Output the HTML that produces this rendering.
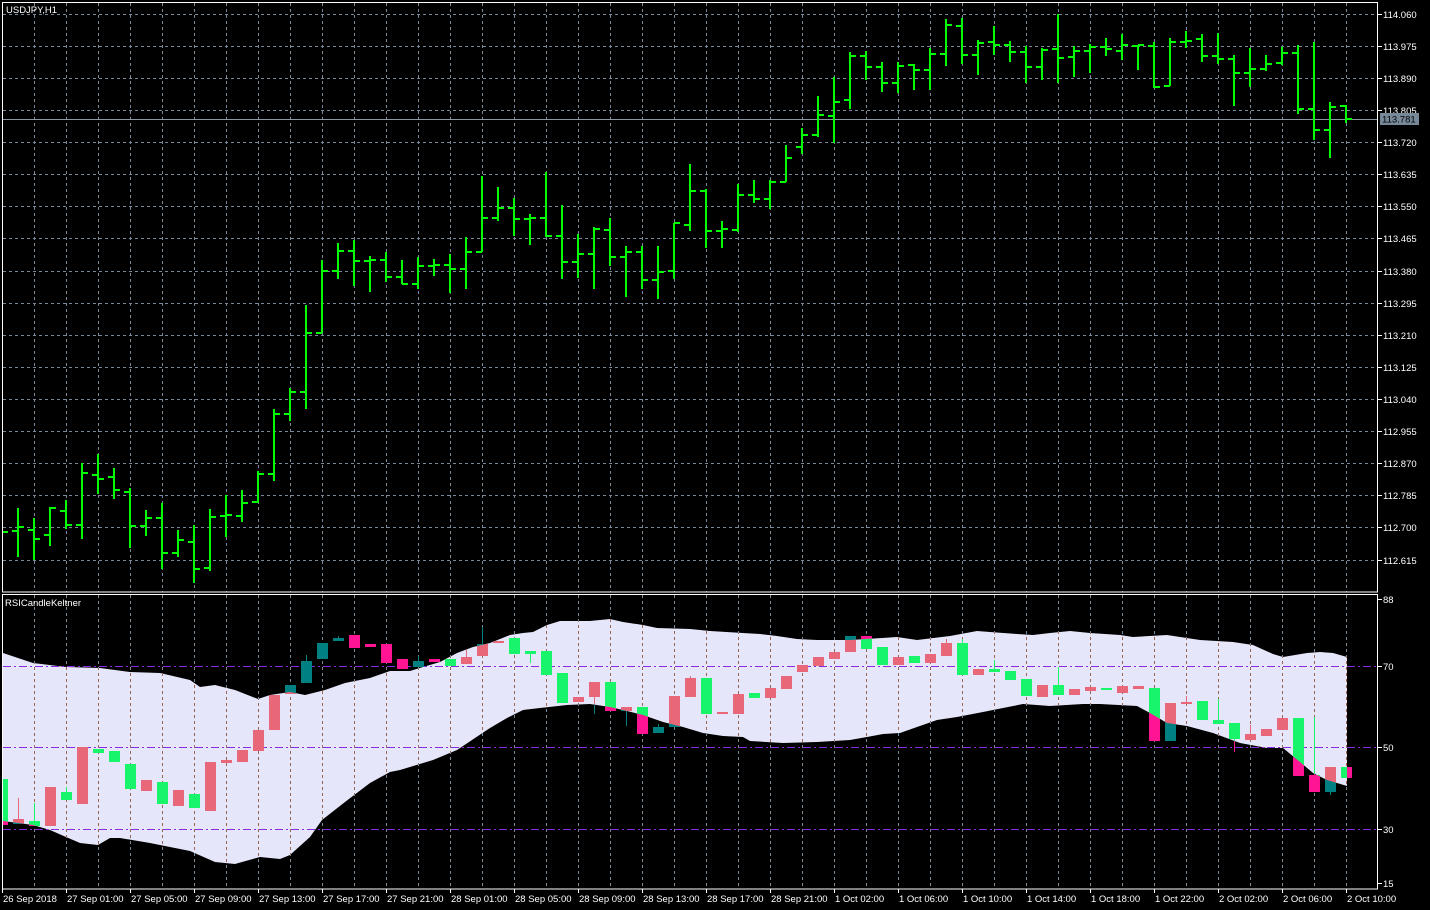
<!DOCTYPE html>
<html><head><meta charset="utf-8"><style>
html,body{margin:0;padding:0;background:#000;width:1430px;height:910px;overflow:hidden}
svg{display:block}
text{font-family:"Liberation Sans","DejaVu Sans",sans-serif;font-size:9.5px;fill:#fff}
</style></head><body>
<svg width="1430" height="910" viewBox="0 0 1430 910" xmlns="http://www.w3.org/2000/svg">
<defs>
<clipPath id="mainclip"><rect x="3" y="3" width="1375" height="589"/></clipPath>
<clipPath id="band"><polygon id="bandp" points="3,653 33,663 66,667 100,668 130,672 160,673 190,680 200,687 215,685 235,690 258,699 270,695 290,692 305,695 325,690 345,683 370,678 390,671 410,671 423,667 440,662 457,653 473,647 490,643 510,635 523,633 533,632 547,625 560,621 590,621 610,619 623,622 643,625 657,628 690,629 710,631 743,633 760,634 777,636 797,639 817,640 850,640 897,637 917,640 950,636 977,631 990,632 1017,634 1033,635 1050,633 1070,631 1090,633 1120,635 1133,637 1167,635 1200,640 1233,642 1253,645 1273,654 1283,657 1307,653 1320,652 1333,653 1347,657 1347,786 1327,780 1313,773 1300,762 1283,748 1267,748 1240,743 1213,733 1187,726 1167,723 1150,713 1137,706 1100,704 1083,704 1050,706 1023,704 1003,708 983,712 957,717 937,720 917,727 900,733 883,734 867,737 850,740 817,742 783,743 750,741 743,737 723,736 703,733 683,727 663,722 643,715 623,710 610,707 590,704 567,705 540,708 523,710 507,718 490,728 457,750 433,760 400,770 390,772 370,783 345,802 322,820 310,837 290,855 280,859 260,857 235,864 215,862 190,851 150,843 120,838 110,838 98,845 80,843 66,837 50,830 33,825 3,821"/></clipPath>
<g id="cu">
<rect x="13" y="819" width="11" height="5"/><rect x="18" y="798" width="1" height="26"/>
<rect x="45" y="787" width="11" height="39"/>
<rect x="77" y="747" width="11" height="57"/>
<rect x="141" y="780" width="11" height="11"/>
<rect x="173" y="790" width="11" height="16"/>
<rect x="205" y="762" width="11" height="49"/>
<rect x="221" y="760" width="11" height="3"/>
<rect x="237" y="750" width="11" height="12"/>
<rect x="253" y="730" width="11" height="21"/>
<rect x="269" y="695" width="11" height="35"/>
<rect x="285" y="685" width="11" height="9"/>
<rect x="301" y="661" width="11" height="22"/><rect x="306" y="655" width="1" height="10"/>
<rect x="317" y="643" width="11" height="16"/>
<rect x="333" y="638" width="11" height="3"/><rect x="338" y="636" width="1" height="5"/>
<rect x="413" y="661" width="11" height="6"/><rect x="418" y="656" width="1" height="6"/>
<rect x="461" y="657" width="11" height="7"/><rect x="466" y="650" width="1" height="8"/>
<rect x="477" y="644" width="11" height="12"/><rect x="482" y="627" width="1" height="18"/>
<rect x="493" y="641" width="11" height="2"/>
<rect x="573" y="697" width="11" height="5"/>
<rect x="589" y="682" width="11" height="15"/><rect x="594" y="696" width="1" height="18"/>
<rect x="621" y="707" width="11" height="4"/><rect x="626" y="710" width="1" height="16"/>
<rect x="653" y="727" width="11" height="6"/><rect x="658" y="724" width="1" height="4"/>
<rect x="669" y="696" width="11" height="31"/>
<rect x="685" y="678" width="11" height="19"/><rect x="690" y="676" width="1" height="3"/>
<rect x="717" y="712" width="11" height="2"/>
<rect x="733" y="694" width="11" height="20"/>
<rect x="765" y="688" width="11" height="10"/>
<rect x="781" y="676" width="11" height="13"/>
<rect x="797" y="665" width="11" height="7"/>
<rect x="813" y="657" width="11" height="9"/>
<rect x="829" y="652" width="11" height="7"/>
<rect x="845" y="636" width="11" height="16"/>
<rect x="893" y="657" width="11" height="8"/>
<rect x="925" y="654" width="11" height="9"/>
<rect x="941" y="643" width="11" height="13"/><rect x="946" y="639" width="1" height="5"/>
<rect x="973" y="669" width="11" height="6"/>
<rect x="1037" y="685" width="11" height="12"/>
<rect x="1069" y="689" width="11" height="6"/>
<rect x="1085" y="687" width="11" height="4"/>
<rect x="1117" y="686" width="11" height="7"/>
<rect x="1133" y="686" width="11" height="3"/>
<rect x="1165" y="703" width="11" height="38"/>
<rect x="1181" y="702" width="11" height="2"/><rect x="1186" y="696" width="1" height="7"/>
<rect x="1245" y="734" width="11" height="6"/><rect x="1250" y="725" width="1" height="10"/>
<rect x="1261" y="729" width="11" height="7"/>
<rect x="1277" y="718" width="11" height="12"/>
<rect x="1325" y="767" width="11" height="25"/><rect x="1330" y="790" width="1" height="5"/>
</g>
<g id="cd">
<rect x="-3" y="779" width="11" height="46"/>
<rect x="29" y="821" width="11" height="5"/><rect x="34" y="803" width="1" height="20"/>
<rect x="61" y="792" width="11" height="8"/><rect x="66" y="787" width="1" height="6"/>
<rect x="93" y="749" width="11" height="4"/>
<rect x="109" y="751" width="11" height="11"/>
<rect x="125" y="764" width="11" height="25"/>
<rect x="157" y="782" width="11" height="22"/>
<rect x="189" y="794" width="11" height="14"/>
<rect x="349" y="635" width="11" height="13"/>
<rect x="365" y="644" width="11" height="3"/>
<rect x="381" y="644" width="11" height="19"/>
<rect x="397" y="659" width="11" height="10"/>
<rect x="429" y="659" width="11" height="3"/>
<rect x="445" y="659" width="11" height="7"/>
<rect x="509" y="638" width="11" height="16"/>
<rect x="525" y="651" width="11" height="3"/><rect x="530" y="653" width="1" height="10"/>
<rect x="541" y="651" width="11" height="24"/>
<rect x="557" y="673" width="11" height="30"/>
<rect x="605" y="682" width="11" height="29"/>
<rect x="637" y="707" width="11" height="27"/>
<rect x="701" y="678" width="11" height="36"/>
<rect x="749" y="693" width="11" height="5"/>
<rect x="861" y="636" width="11" height="13"/>
<rect x="877" y="647" width="11" height="18"/>
<rect x="909" y="656" width="11" height="7"/>
<rect x="957" y="643" width="11" height="32"/><rect x="962" y="639" width="1" height="5"/>
<rect x="989" y="669" width="11" height="3"/><rect x="994" y="660" width="1" height="10"/>
<rect x="1005" y="671" width="11" height="9"/>
<rect x="1021" y="679" width="11" height="17"/>
<rect x="1053" y="685" width="11" height="10"/><rect x="1058" y="667" width="1" height="19"/>
<rect x="1101" y="688" width="11" height="2"/>
<rect x="1149" y="688" width="11" height="53"/>
<rect x="1197" y="701" width="11" height="19"/>
<rect x="1213" y="720" width="11" height="4"/><rect x="1218" y="699" width="1" height="22"/>
<rect x="1229" y="723" width="11" height="16"/><rect x="1234" y="738" width="1" height="14"/>
<rect x="1293" y="718" width="11" height="58"/>
<rect x="1309" y="775" width="11" height="17"/><rect x="1314" y="717" width="1" height="59"/>
<rect x="1341" y="767" width="11" height="11"/>
</g>
</defs>

<!-- grids -->
<g stroke="#778899" stroke-width="1" stroke-dasharray="3,3" fill="none" shape-rendering="crispEdges">
<path d="M3 14.5H1378M3 46.5H1378M3 78.5H1378M3 110.5H1378M3 142.5H1378M3 174.5H1378M3 206.5H1378M3 238.5H1378M3 271.5H1378M3 303.5H1378M3 335.5H1378M3 367.5H1378M3 399.5H1378M3 431.5H1378M3 463.5H1378M3 495.5H1378M3 527.5H1378M3 560.5H1378"/>
<path d="M34.5 3V592M66.5 3V592M98.5 3V592M130.5 3V592M162.5 3V592M194.5 3V592M226.5 3V592M258.5 3V592M290.5 3V592M322.5 3V592M354.5 3V592M386.5 3V592M418.5 3V592M450.5 3V592M482.5 3V592M514.5 3V592M546.5 3V592M578.5 3V592M610.5 3V592M642.5 3V592M674.5 3V592M706.5 3V592M738.5 3V592M770.5 3V592M802.5 3V592M834.5 3V592M866.5 3V592M898.5 3V592M930.5 3V592M962.5 3V592M994.5 3V592M1026.5 3V592M1058.5 3V592M1090.5 3V592M1122.5 3V592M1154.5 3V592M1186.5 3V592M1218.5 3V592M1250.5 3V592M1282.5 3V592M1314.5 3V592M1346.5 3V592" id="vg"/>
<path d="M34.5 595V889M66.5 595V889M98.5 595V889M130.5 595V889M162.5 595V889M194.5 595V889M226.5 595V889M258.5 595V889M290.5 595V889M322.5 595V889M354.5 595V889M386.5 595V889M418.5 595V889M450.5 595V889M482.5 595V889M514.5 595V889M546.5 595V889M578.5 595V889M610.5 595V889M642.5 595V889M674.5 595V889M706.5 595V889M738.5 595V889M770.5 595V889M802.5 595V889M834.5 595V889M866.5 595V889M898.5 595V889M930.5 595V889M962.5 595V889M994.5 595V889M1026.5 595V889M1058.5 595V889M1090.5 595V889M1122.5 595V889M1154.5 595V889M1186.5 595V889M1218.5 595V889M1250.5 595V889M1282.5 595V889M1314.5 595V889M1346.5 595V889" id="vg2"/>
</g>

<!-- price line -->
<line x1="3" y1="119.5" x2="1378" y2="119.5" stroke="#8a96a4" stroke-width="1"/>

<!-- main bars -->
<g clip-path="url(#mainclip)">
<path fill="none" stroke="#00ff00" stroke-width="2" d="
M2 520V540M-4 528H2M2 532H8
M18 508V557M12 531H18M18 527H24
M34 518V560M28 530H34M34 539H40
M50 507V546M44 535H50M50 508H56
M66 500V529M60 511H66M66 525H72
M82 463V539M76 525H82M82 473H88
M98 454V494M92 475H98M98 479H104
M114 468V499M108 477H114M114 490H120
M130 488V548M124 492H130M130 526H136
M146 510V536M140 526H146M146 518H152
M162 503V569M156 518H162M162 553H168
M178 530V557M172 553H178M178 540H184
M194 525V583M188 542H194M194 569H200
M210 509V571M204 568H210M210 517H216
M226 495V537M220 516H226M226 515H232
M242 490V522M236 516H242M242 503H248
M258 471V503M252 502H258M258 474H264
M274 409V481M268 474H274M274 414H280
M290 388V421M284 414H290M290 392H296
M306 305V409M300 392H306M306 333H312
M322 260V333M316 333H322M322 271H328
M338 243V279M332 271H338M338 251H344
M354 240V286M348 251H354M354 261H360
M370 256V292M364 261H370M370 260H376
M386 252V282M380 260H386M386 277H392
M402 260V284M396 277H402M402 284H408
M418 257V289M412 284H418M418 266H424
M434 259V276M428 266H434M434 265H440
M450 254V293M444 265H450M450 269H456
M466 237V289M460 269H466M466 252H472
M482 176V252M476 252H482M482 218H488
M498 187V221M492 218H498M498 208H504
M514 198V236M508 208H514M514 219H520
M530 214V245M524 219H530M530 218H536
M546 172V237M540 218H546M546 236H552
M562 205V279M556 236H562M562 262H568
M578 234V278M572 262H578M578 254H584
M594 227V289M588 254H594M594 229H600
M610 218V266M604 230H610M610 257H616
M626 246V297M620 257H626M626 252H632
M642 246V289M636 252H642M642 280H648
M658 246V299M652 280H658M658 272H664
M674 223V279M668 271H674M674 223H680
M690 164V231M684 225H690M690 191H696
M706 189V248M700 191H706M706 231H712
M722 221V248M716 231H722M722 229H728
M738 184V232M732 230H738M738 195H744
M754 180V203M748 195H754M754 199H760
M770 180V209M764 199H770M770 182H776
M786 145V182M780 182H786M786 158H792
M802 128V154M796 147H802M802 135H808
M818 96V137M812 135H818M818 115H824
M834 77V143M828 116H834M834 102H840
M850 52V109M844 100H850M850 56H856
M866 51V80M860 56H866M866 67H872
M882 62V92M876 67H882M882 83H888
M898 62V93M892 83H898M898 66H904
M914 64V90M908 65H914M914 70H920
M930 48V90M924 70H930M930 54H936
M946 19V66M940 54H946M946 25H952
M962 18V64M956 26H962M962 55H968
M978 40V75M972 55H978M978 43H984
M994 26V55M988 42H994M994 45H1000
M1010 41V62M1004 45H1010M1010 52H1016
M1026 46V83M1020 52H1026M1026 67H1032
M1042 48V80M1036 67H1042M1042 50H1048
M1058 14V83M1052 49H1058M1058 58H1064
M1074 46V77M1068 57H1074M1074 51H1080
M1090 44V73M1084 51H1090M1090 47H1096
M1106 38V56M1100 47H1106M1106 49H1112
M1122 34V60M1116 51H1122M1122 45H1128
M1138 45V70M1132 46H1138M1138 45H1144
M1154 42V88M1148 46H1154M1154 87H1160
M1170 38V86M1164 86H1170M1170 42H1176
M1186 31V48M1180 42H1186M1186 41H1192
M1202 34V62M1196 39H1202M1202 56H1208
M1218 33V64M1212 56H1218M1218 59H1224
M1234 55V106M1228 59H1234M1234 73H1240
M1250 48V87M1244 73H1250M1250 69H1256
M1266 55V71M1260 69H1266M1266 64H1272
M1282 47V65M1276 63H1282M1282 53H1288
M1298 45V114M1292 53H1298M1298 109H1304
M1314 42V140M1308 109H1314M1314 130H1320
M1330 102V158M1324 130H1330M1330 107H1336
M1346 105V123M1340 106H1346M1346 119H1352"/>
</g>

<!-- indicator band -->
<use href="#bandp" fill="#e6e6fa"/>
<g clip-path="url(#band)" stroke="#9a6656" stroke-width="1" stroke-dasharray="3,3" fill="none" shape-rendering="crispEdges">
<use href="#vg2"/>
</g>
<!-- levels -->
<g stroke="#8a2be2" stroke-width="1" fill="none" stroke-dasharray="8,3,2,3" shape-rendering="crispEdges">
<line x1="3" y1="666.5" x2="1378" y2="666.5"/>
<line x1="3" y1="747.5" x2="1378" y2="747.5"/>
<line x1="3" y1="829.5" x2="1378" y2="829.5"/>
</g>
<!-- candles -->
<g clip-path="url(#lowclip)">
<use href="#cu" fill="#008080"/>
<use href="#cd" fill="#ff1493"/>
<g clip-path="url(#band)">
<use href="#cu" fill="#e8687a"/>
<use href="#cd" fill="#19f56a"/>
</g>
</g>
<clipPath id="lowclip"><rect x="3" y="595" width="1375" height="294"/></clipPath>

<!-- frames -->
<g fill="none" stroke="#fff" stroke-width="1" shape-rendering="crispEdges">
<rect x="2.5" y="2.5" width="1375" height="589.5"/>
<rect x="2.5" y="594.5" width="1375" height="294.5"/>
</g>

<!-- labels -->
<text x="6" y="13">USDJPY,H1</text>
<text x="5" y="606">RSICandleKeltner</text>

<g stroke="#fff" stroke-width="1" shape-rendering="crispEdges">
<path d="M1378 14.5h4M1378 46.5h4M1378 78.5h4M1378 110.5h4M1378 142.5h4M1378 174.5h4M1378 206.5h4M1378 238.5h4M1378 271.5h4M1378 303.5h4M1378 335.5h4M1378 367.5h4M1378 399.5h4M1378 431.5h4M1378 463.5h4M1378 495.5h4M1378 527.5h4M1378 560.5h4M1378 599.5h4M1378 666.5h4M1378 747.5h4M1378 829.5h4M1378 883.5h4"/>
<path d="M2.5 889v4M66.5 889v4M130.5 889v4M194.5 889v4M258.5 889v4M322.5 889v4M386.5 889v4M450.5 889v4M514.5 889v4M578.5 889v4M642.5 889v4M706.5 889v4M770.5 889v4M834.5 889v4M898.5 889v4M962.5 889v4M1026.5 889v4M1090.5 889v4M1154.5 889v4M1218.5 889v4M1282.5 889v4M1346.5 889v4"/>
</g>
<g>
<text x="1383" y="18">114.060</text>
<text x="1383" y="50">113.975</text>
<text x="1383" y="82">113.890</text>
<text x="1383" y="114">113.805</text>
<text x="1383" y="146">113.720</text>
<text x="1383" y="178">113.635</text>
<text x="1383" y="210">113.550</text>
<text x="1383" y="242">113.465</text>
<text x="1383" y="275">113.380</text>
<text x="1383" y="307">113.295</text>
<text x="1383" y="339">113.210</text>
<text x="1383" y="371">113.125</text>
<text x="1383" y="403">113.040</text>
<text x="1383" y="435">112.955</text>
<text x="1383" y="467">112.870</text>
<text x="1383" y="499">112.785</text>
<text x="1383" y="531">112.700</text>
<text x="1383" y="564">112.615</text>
<text x="1383" y="603">88</text>
<text x="1383" y="670">70</text>
<text x="1383" y="751">50</text>
<text x="1383" y="833">30</text>
<text x="1383" y="887">15</text>
</g>
<rect x="1380" y="113" width="39" height="12" fill="#778899"/>
<text x="1382" y="122.5" style="fill:#000">113.781</text>

<g>
<text x="3" y="902">26 Sep 2018</text>
<text x="67" y="902">27 Sep 01:00</text>
<text x="131" y="902">27 Sep 05:00</text>
<text x="195" y="902">27 Sep 09:00</text>
<text x="259" y="902">27 Sep 13:00</text>
<text x="323" y="902">27 Sep 17:00</text>
<text x="387" y="902">27 Sep 21:00</text>
<text x="451" y="902">28 Sep 01:00</text>
<text x="515" y="902">28 Sep 05:00</text>
<text x="579" y="902">28 Sep 09:00</text>
<text x="643" y="902">28 Sep 13:00</text>
<text x="707" y="902">28 Sep 17:00</text>
<text x="771" y="902">28 Sep 21:00</text>
<text x="835" y="902">1 Oct 02:00</text>
<text x="899" y="902">1 Oct 06:00</text>
<text x="963" y="902">1 Oct 10:00</text>
<text x="1027" y="902">1 Oct 14:00</text>
<text x="1091" y="902">1 Oct 18:00</text>
<text x="1155" y="902">1 Oct 22:00</text>
<text x="1219" y="902">2 Oct 02:00</text>
<text x="1283" y="902">2 Oct 06:00</text>
<text x="1347" y="902">2 Oct 10:00</text>
</g>
</svg>
</body></html>
